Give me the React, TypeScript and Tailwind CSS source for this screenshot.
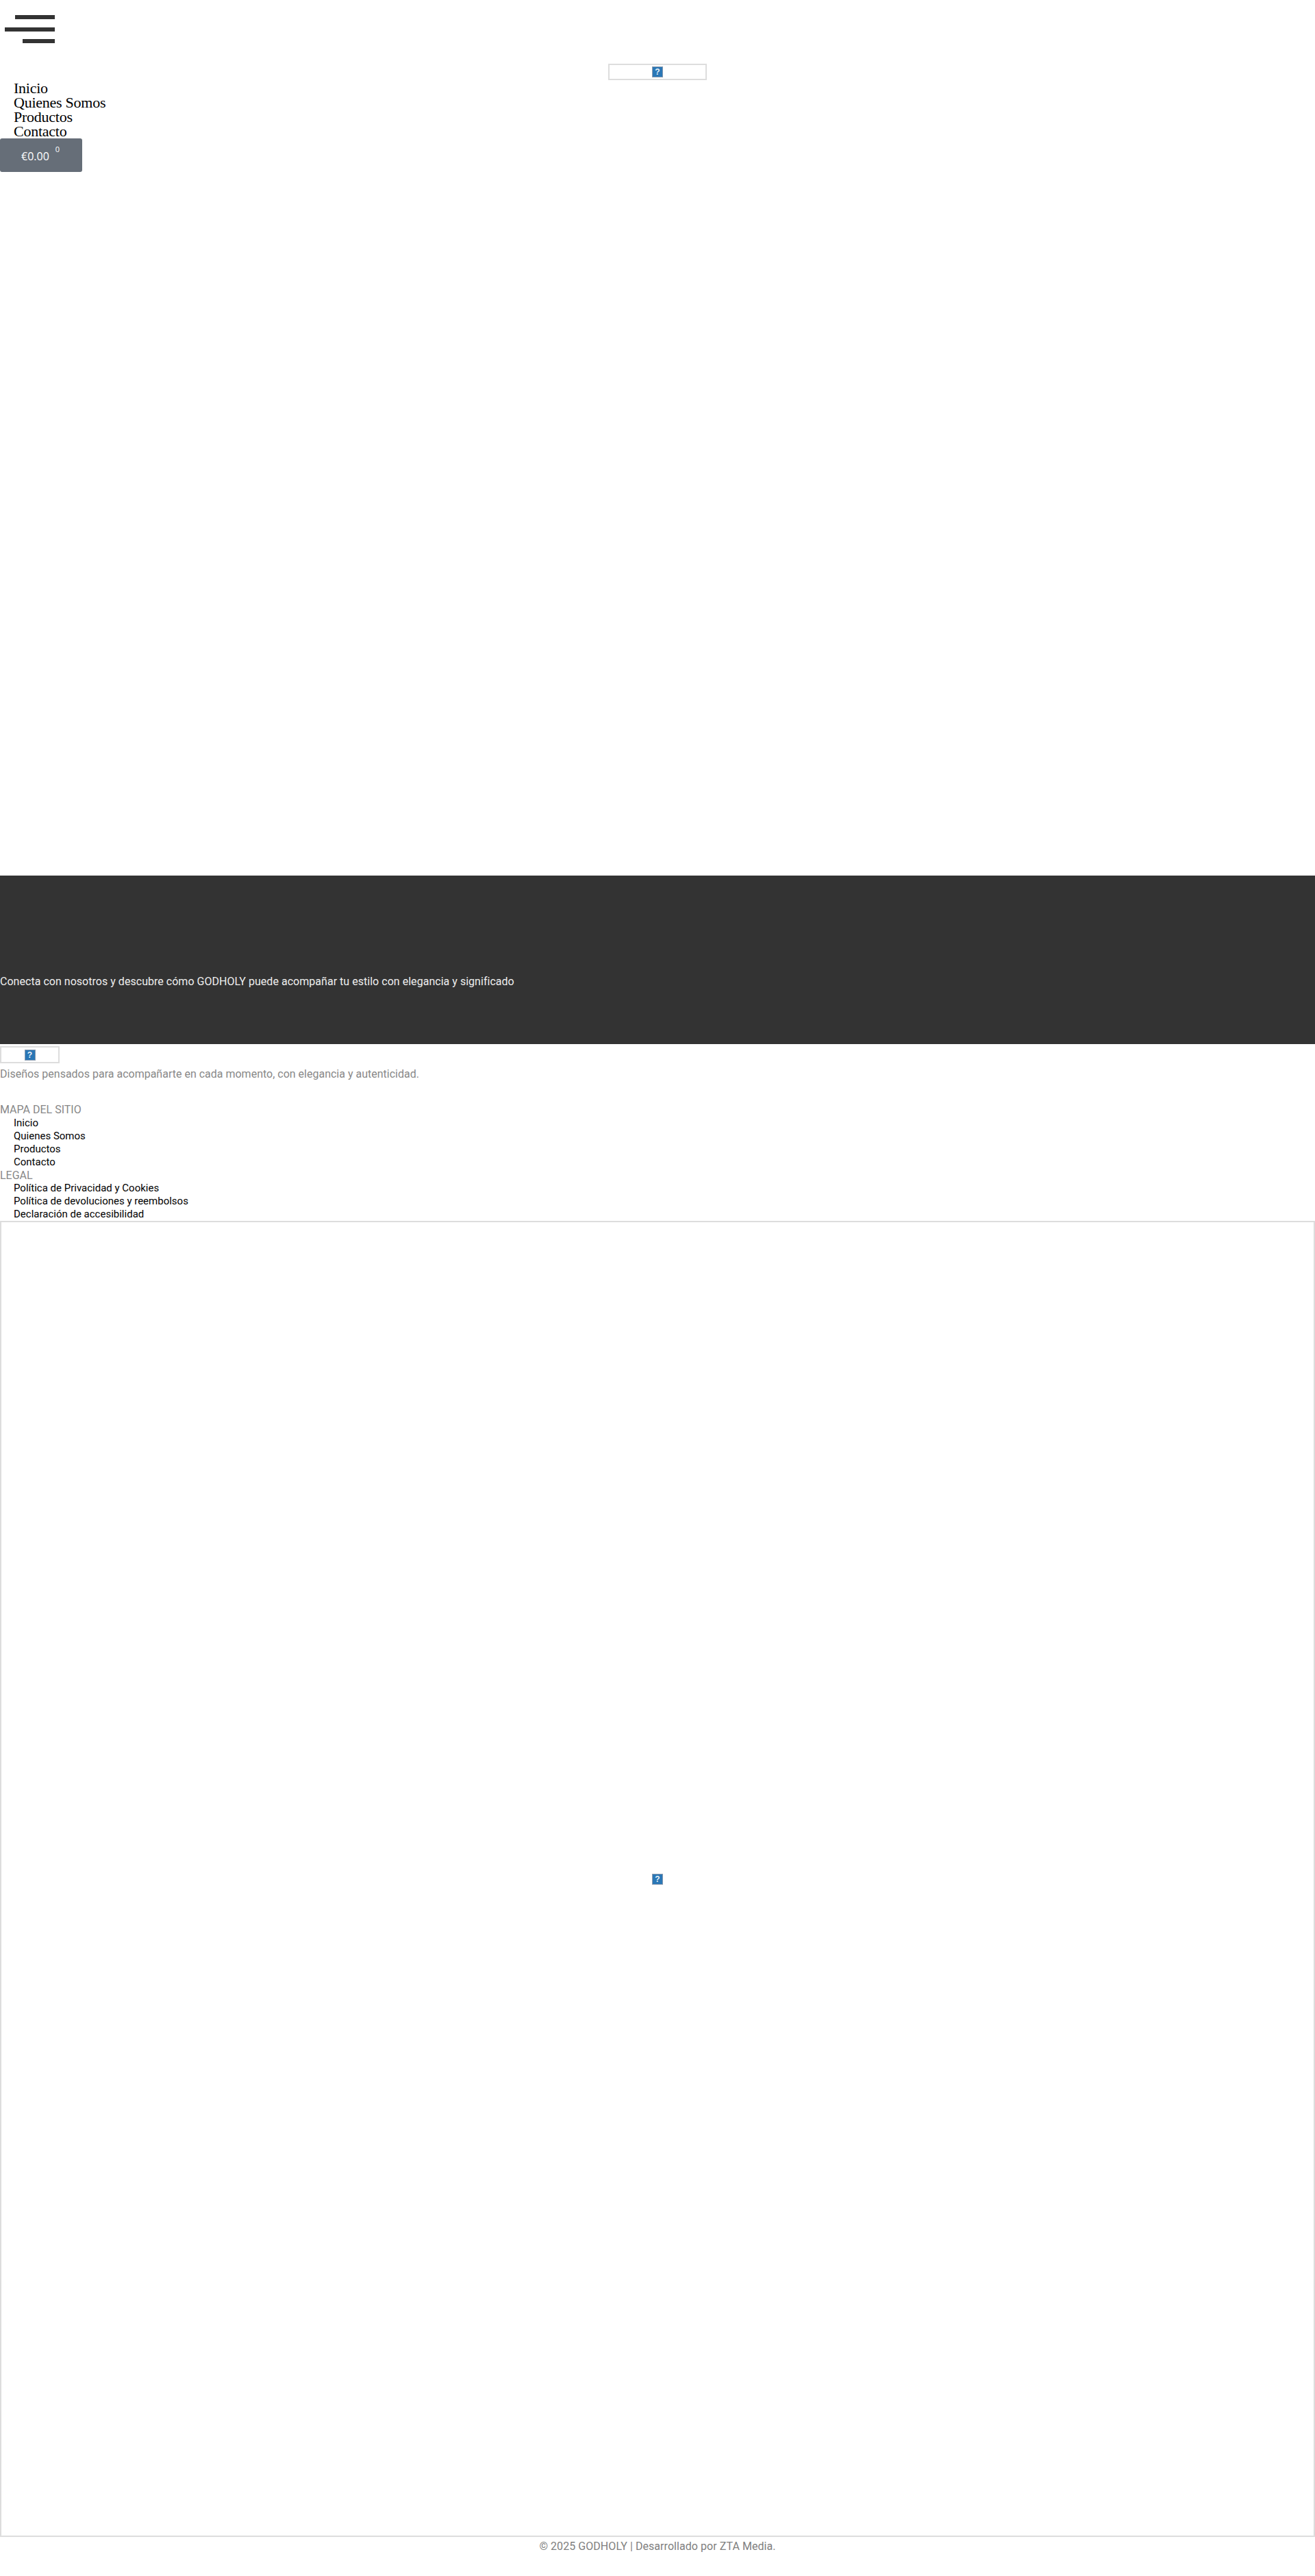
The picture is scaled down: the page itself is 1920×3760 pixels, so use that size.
const ROBOTO = "font-['Roboto',sans-serif]";

function QuestionIcon() {
  return (
    <span className="flex h-[16px] w-[16px] items-center justify-center border border-[#8a9bb0] bg-[#2a77b6] font-['Liberation_Sans',sans-serif] text-[12px] font-bold leading-none text-[#e8f2fa]">
      ?
    </span>
  );
}

function Placeholder({ className }: { className: string }) {
  return (
    <div className={`flex items-center justify-center border-2 border-[#dddddd] bg-white ${className}`}>
      <QuestionIcon />
    </div>
  );
}

const siteLinks = ["Inicio", "Quienes Somos", "Productos", "Contacto"];
const legalLinks = [
  "Política de Privacidad y Cookies",
  "Política de devoluciones y reembolsos",
  "Declaración de accesibilidad",
];

function LinkList({ items, className }: { items: string[]; className: string }) {
  return (
    <ul className={`pl-5 text-black ${className}`}>
      {items.map((item) => (
        <li key={item} className="text-[15px] leading-[19px]">
          {item}
        </li>
      ))}
    </ul>
  );
}

export default function App() {
  return (
    <div className={`bg-white ${ROBOTO}`}>
      <header className="h-[1278px]">
        <div className="h-[93px] pt-[22px]">
          <svg width="80" height="42" viewBox="0 0 80 42" className="block" aria-hidden="true">
            <rect x="22" y="0" width="58" height="6" fill="#333333" />
            <rect x="7" y="18" width="73" height="6" fill="#333333" />
            <rect x="33" y="35" width="47" height="6" fill="#333333" />
          </svg>
        </div>
        <Placeholder className="mx-auto h-[24px] w-[144px]" />
        <ul className="mt-px pl-5 font-['Liberation_Serif',serif] text-[22px] leading-[21px] tracking-[-0.25px] text-black">
          {siteLinks.map((item) => (
            <li key={item}>{item}</li>
          ))}
        </ul>
        <button className="flex h-[49px] w-[120px] items-start justify-start rounded-[3px] bg-[#666e78] pl-[31px] font-['Open_Sans',sans-serif] text-white">
          <span className="mt-[15px] text-[16px] leading-[22px]">€0.00</span>
          <span className="ml-[9px] mt-[9px] text-[11px] leading-[14px]">0</span>
        </button>
      </header>

      <section className="flex h-[246px] items-start bg-[#333333] pt-[143px] text-[16px] leading-[24px] tracking-[0.03px] text-[#eeeeee]">
        <p>Conecta con nosotros y descubre cómo GODHOLY puede acompañar tu estilo con elegancia y significado</p>
      </section>

      <footer className="pt-[3px]">
        <Placeholder className="h-[25px] w-[87px]" />
        <p className="mt-[4px] text-[16px] leading-[24px] text-[#888888]">
          Diseños pensados para acompañarte en cada momento, con elegancia y autenticidad.
        </p>
        <div className="mt-[30px]">
          <h3 className="text-[16px] leading-[19px] text-[#888888]">MAPA DEL SITIO</h3>
          <LinkList items={siteLinks} className="pt-px" />
          <h3 className="text-[16px] leading-[19px] text-[#888888]">LEGAL</h3>
          <LinkList items={legalLinks} className="" />
        </div>
        <Placeholder className="h-[1921px] w-full" />
        <p className="mt-[2px] text-center text-[16px] leading-[24px] tracking-[0.06px] text-[#808080]">
          © 2025 GODHOLY | Desarrollado por ZTA Media.
        </p>
      </footer>
    </div>
  );
}
